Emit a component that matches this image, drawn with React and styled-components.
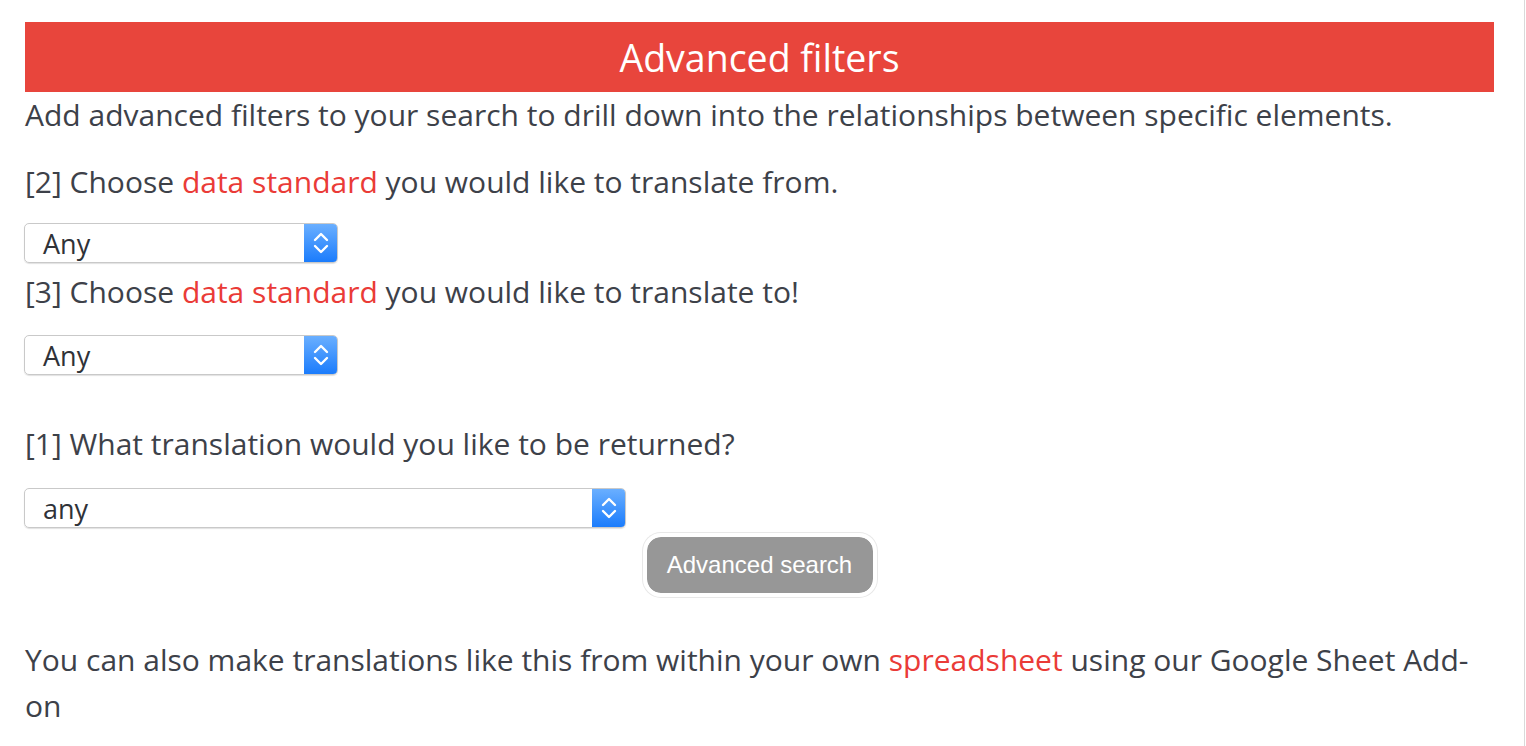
import React from 'react';
import styled, { createGlobalStyle } from 'styled-components';

const colors = {
  red: '#e8453c',
  link: '#ea3b37',
  text: '#3d4149',
  grey: '#979797',
};

const GlobalStyle = createGlobalStyle`
  html, body {
    margin: 0;
    padding: 0;
    background: #fff;
  }
  body {
    font-family: "Open Sans", Lato, sans-serif;
    color: ${colors.text};
  }
`;

const Page = styled.div`
  width: 1525px;
  height: 746px;
  border-right: 1px solid #d9d9d9;
  overflow: hidden;
  padding: 22px 30px 0 25px;
  box-sizing: border-box;
`;

const Header = styled.h2`
  margin: 0;
  height: 70px;
  background: ${colors.red};
  color: #fff;
  font-size: 37.5px;
  font-weight: 400;
  display: flex;
  align-items: center;
  justify-content: center;
`;

const Text = styled.p`
  margin: ${p => p.$top || 0}px 0 ${p => p.$bottom || 0}px;
  font-size: 30px;
  line-height: 46px;
`;

const Link = styled.span`
  color: ${colors.link};
`;

const Select = styled.div`
  width: ${p => p.$width}px;
  height: 40px;
  margin-top: ${p => p.$top || 0}px;
  box-sizing: border-box;
  border: 1px solid #c9c9c9;
  border-radius: 5px;
  box-shadow: 0 1px 1px rgba(0, 0, 0, 0.12);
  display: flex;
  align-items: center;
  overflow: hidden;
  margin-left: -1px;
`;

const Value = styled.span`
  flex: 1;
  padding-left: 18px;
  font-size: 27px;
  color: #2f3238;
`;

const Stepper = styled.span`
  width: 33px;
  height: 100%;
  background: linear-gradient(#6aafff, #1b7cfc);
  display: flex;
  align-items: center;
  justify-content: center;
`;

const ButtonRow = styled.div`
  display: flex;
  justify-content: center;
  margin-top: 5px;
`;

const Button = styled.button`
  width: 234px;
  height: 64px;
  padding: 0;
  border: 4px solid #fff;
  border-radius: 18px;
  box-shadow: 0 0 0 1px #e8e8e8;
  background: ${colors.grey};
  background-clip: padding-box;
  color: #fff;
  font-family: "Liberation Sans", Arial, sans-serif;
  font-size: 24px;
  cursor: pointer;
`;

const Arrows = () => (
  <svg width="18" height="26" viewBox="0 0 18 26" fill="none" stroke="#fff" strokeWidth="2.4" strokeLinecap="round" strokeLinejoin="round">
    <polyline points="3,10 9,4 15,10" />
    <polyline points="3,16 9,22 15,16" />
  </svg>
);

const Dropdown = ({ width, top, value }) => (
  <Select $width={width} $top={top}>
    <Value>{value}</Value>
    <Stepper><Arrows /></Stepper>
  </Select>
);

export default function App() {
  return (
    <Page>
      <GlobalStyle />
      <Header>Advanced filters</Header>
      <Text>Add advanced filters to your search to drill down into the relationships between specific elements.</Text>

      <Text $top={21}>[2] Choose <Link>data standard</Link> you would like to translate from.</Text>
      <Dropdown width={314} top={18} value="Any" />

      <Text $top={6}>[3] Choose <Link>data standard</Link> you would like to translate to!</Text>
      <Dropdown width={314} top={20} value="Any" />

      <Text $top={46}>[1] What translation would you like to be returned?</Text>
      <Dropdown width={602} top={21} value="any" />

      <ButtonRow>
        <Button>Advanced search</Button>
      </ButtonRow>

      <Text $top={40}>You can also make translations like this from within your own <Link>spreadsheet</Link> using our Google Sheet Add-on</Text>
    </Page>
  );
}
